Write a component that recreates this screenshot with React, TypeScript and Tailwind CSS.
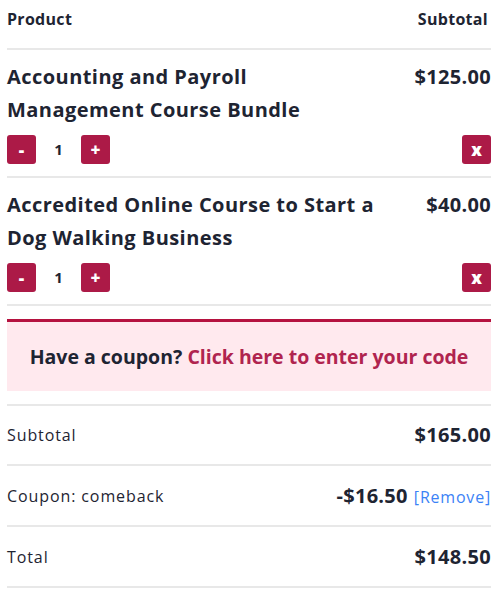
import { useState } from "react";

type Item = { id: number; name: string; price: number; qty: number };

const initialItems: Item[] = [
  { id: 1, name: "Accounting and Payroll Management Course Bundle", price: 125, qty: 1 },
  { id: 2, name: "Accredited Online Course to Start a Dog Walking Business", price: 40, qty: 1 },
];

function SquareButton({ label, onClick }: { label: string; onClick?: () => void }) {
  return (
    <button
      onClick={onClick}
      className="w-[29px] h-[29px] rounded-[3px] bg-[#ac1a47] text-white text-[17px] font-extrabold flex items-center justify-center leading-none"
    >
      {label}
    </button>
  );
}

export default function App() {
  const [items, setItems] = useState<Item[]>(initialItems);

  const setQty = (id: number, delta: number) =>
    setItems((prev) =>
      prev.map((it) => (it.id === id ? { ...it, qty: Math.max(1, it.qty + delta) } : it))
    );

  return (
    <div
      className="bg-white text-[#1e2432] pl-[7px] pr-[9px] w-[500px]"
      style={{ fontFamily: "'Open Sans', 'Noto Sans', sans-serif" }}
    >
      {/* header */}
      <div className="flex justify-between h-[50px] border-b-2 border-[#e8e8e8] text-[16px] font-bold pt-[7px] leading-[24px] tracking-[0.3px]">
        <span>Product</span>
        <span className="mr-[3px]">Subtotal</span>
      </div>

      {items.map((it) => (
        <div key={it.id} className="border-b-2 border-[#e8e8e8] pt-[10px] pb-[12px]">
          <div className="flex justify-between gap-4">
            <div className="text-[20px] font-bold leading-[33px] tracking-[0.45px] max-w-[371px]">
              {it.name}
            </div>
            <div className="text-[20px] font-bold leading-[33px] tracking-[0.3px] whitespace-nowrap">
              ${(it.price * it.qty).toFixed(2)}
            </div>
          </div>
          <div className="flex justify-between items-center mt-[9px]">
            <div className="flex items-center">
              <SquareButton label="-" onClick={() => setQty(it.id, -1)} />
              <span className="w-[45px] text-center text-[15px] font-bold">{it.qty}</span>
              <SquareButton label="+" onClick={() => setQty(it.id, 1)} />
            </div>
            <SquareButton label="x" />
          </div>
        </div>
      ))}

      {/* coupon notice */}
      <div className="mt-[13px] border-t-[3px] border-[#b5123f] bg-[#ffe9ee] h-[72px] flex items-center justify-center text-[19.5px] font-bold">
        <span>
          Have a coupon?{" "}
          <a href="#" className="text-[#b0244f]">
            Click here to enter your code
          </a>
        </span>
      </div>

      {/* totals */}
      <div className="mt-[13px] border-t-2 border-[#e8e8e8]">
        <div className="flex justify-between items-center h-[60px] border-b-2 border-[#e8e8e8]">
          <span className="text-[16px] tracking-[0.9px]">Subtotal</span>
          <span className="text-[20px] font-bold tracking-[0.3px]">$165.00</span>
        </div>
        <div className="flex justify-between items-center h-[61px] border-b-2 border-[#e8e8e8]">
          <span className="text-[16px] tracking-[0.9px]">Coupon: comeback</span>
          <span className="flex items-baseline gap-[6px]">
            <span className="text-[20px] font-bold tracking-[0.3px]">-$16.50</span>
            <a href="#" className="text-[16px] tracking-[0.8px] text-[#3b82f6]">
              [Remove]
            </a>
          </span>
        </div>
        <div className="flex justify-between items-center h-[61px] border-b-2 border-[#e8e8e8]">
          <span className="text-[16px] tracking-[0.9px]">Total</span>
          <span className="text-[20px] font-bold tracking-[0.3px]">$148.50</span>
        </div>
      </div>
    </div>
  );
}
